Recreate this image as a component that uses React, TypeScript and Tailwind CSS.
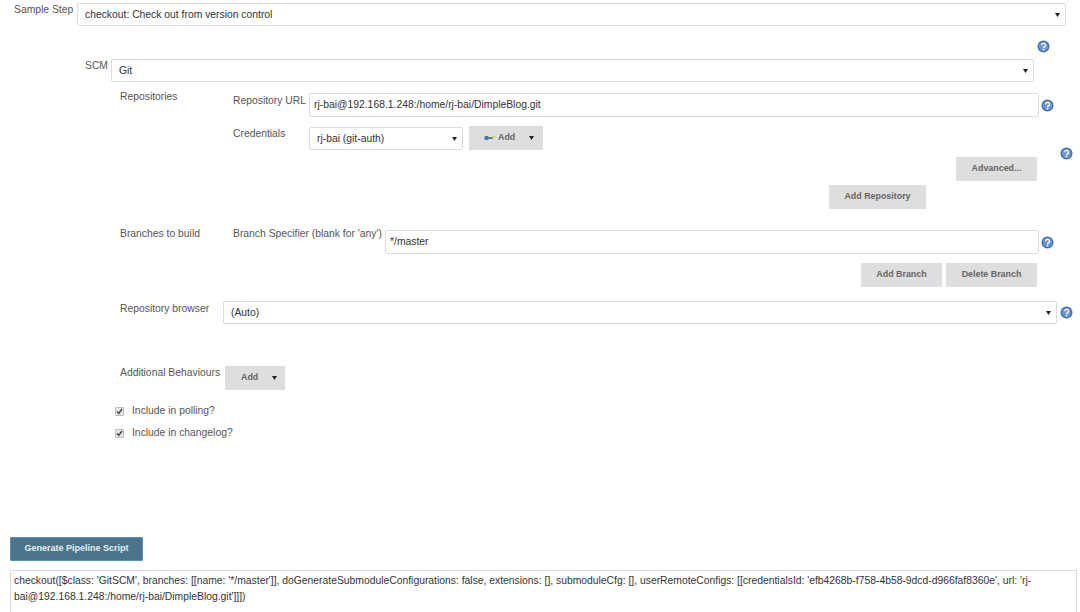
import React from 'react';

function Help() {
  return (
    <svg width="13" height="13" viewBox="0 0 13 13" className="shrink-0">
      <circle cx="6.5" cy="6.5" r="6" fill="#3f6fb0" />
      <circle cx="6.5" cy="6.5" r="4.6" fill="#6f97cf" />
      <path d="M4.7 5.2a1.9 1.9 0 1 1 2.7 1.7c-.6.3-.9.6-.9 1.3" fill="none" stroke="#fff" strokeWidth="1.3" />
      <rect x="5.8" y="9" width="1.4" height="1.4" fill="#fff" />
    </svg>
  );
}

function Caret({ className = '' }: { className?: string }) {
  return (
    <svg width="5" height="4" viewBox="0 0 5 4" className={className}>
      <path d="M0 0h5L2.5 4z" fill="#222" />
    </svg>
  );
}

function Select({ value, className }: { value: string; className: string }) {
  return (
    <div className={`flex h-[23px] items-center justify-between rounded-[2px] border border-[#dcdcdc] bg-white pl-[7px] pr-[5px] text-[#333] ${className}`}>
      <span>{value}</span>
      <Caret />
    </div>
  );
}

function Input({ value, className }: { value: string; className: string }) {
  return (
    <div className={`flex h-[24px] items-center rounded-[2px] border border-[#dcdcdc] bg-white pl-1 text-[#333] ${className}`}>
      {value}
    </div>
  );
}

function Btn({ label, className }: { label: string; className: string }) {
  return (
    <div className={`flex h-[24px] items-center justify-center bg-[#dedede] text-[8.9px] font-bold text-[#666] ${className}`}>
      {label}
    </div>
  );
}

function KeyIcon() {
  return (
    <svg width="12" height="6" viewBox="0 0 12 6">
      <circle cx="2.5" cy="3" r="2.2" fill="#4a7aa8" />
      <rect x="4" y="2" width="5" height="2" fill="#4a7aa8" />
      <rect x="8" y="1" width="3.5" height="2" fill="#e0cf70" />
    </svg>
  );
}

function Check({ label, className }: { label: string; className: string }) {
  return (
    <div className={`flex h-[14px] items-center pl-[115px] ${className}`}>
      <div className="flex h-[9px] w-[9px] items-center justify-center rounded-[1px] border border-[#bbb] bg-[#e6e6e6]">
        <svg width="7" height="7" viewBox="0 0 7 7">
          <path d="M1 3.5l1.8 2L6 1" fill="none" stroke="#444" strokeWidth="1.4" />
        </svg>
      </div>
      <span className="ml-2 text-[#555]">{label}</span>
    </div>
  );
}

export default function App() {
  return (
    <div className="h-[612px] w-[1080px] overflow-hidden bg-white pt-[3px] text-[10.35px] text-[#555] [font-family:'Liberation_Sans',Arial,sans-serif]">
      <div className="flex pl-[14px]">
        <div className="w-[63px] leading-[13px]">Sample Step</div>
        <Select value="checkout: Check out from version control" className="w-[989px]" />
      </div>

      <div className="mt-[14px] flex justify-end pr-[30px]">
        <Help />
      </div>

      <div className="mt-[6px] flex pl-[85px]">
        <div className="w-[26px] leading-[13px]">SCM</div>
        <Select value="Git" className="w-[923px]" />
      </div>

      <div className="mt-[11px] flex pl-[120px]">
        <div className="-mt-[3px] w-[113px] leading-[13px]">Repositories</div>
        <div className="w-[76px] pt-px leading-[13px]">Repository URL</div>
        <Input value="rj-bai@192.168.1.248:/home/rj-bai/DimpleBlog.git" className="w-[730px]" />
        <div className="ml-[2px] pt-[6px]"><Help /></div>
      </div>

      <div className="mt-[9px] flex pl-[233px]">
        <div className="w-[76px] pt-px leading-[13px]">Credentials</div>
        <Select value="rj-bai (git-auth)" className="mt-px w-[154px]" />
        <div className="ml-[6px] flex h-[24px] w-[74px] items-center bg-[#dedede] pl-[15px] text-[8.9px] font-bold text-[#666]">
          <KeyIcon />
          <span className="ml-[2px]">Add</span>
          <Caret className="ml-[14px]" />
        </div>
      </div>

      <div className="-mt-[3px] flex justify-end pr-[7px]">
        <Btn label="Advanced..." className="mt-[10px] w-[81px]" />
        <div className="ml-[23px]"><Help /></div>
      </div>

      <div className="mt-[4px] flex justify-end pr-[154px]">
        <Btn label="Add Repository" className="w-[97px]" />
      </div>

      <div className="mt-[21px] flex pl-[120px]">
        <div className="w-[113px] leading-[13px] -mt-[3px]">Branches to build</div>
        <div className="w-[152px] leading-[13px] -mt-[3px]">Branch Specifier (blank for 'any')</div>
        <Input value="*/master" className="w-[654px]" />
        <div className="ml-[2px] pt-[6px]"><Help /></div>
      </div>

      <div className="mt-[9px] flex justify-end gap-1 pr-[43px]">
        <Btn label="Add Branch" className="w-[81px]" />
        <Btn label="Delete Branch" className="w-[91px]" />
      </div>

      <div className="mt-[14px] flex pl-[120px]">
        <div className="w-[103px] pt-px leading-[13px]">Repository browser</div>
        <Select value="(Auto)" className="w-[834px]" />
        <div className="ml-[3px] pt-[5px]"><Help /></div>
      </div>

      <div className="mt-[42px] flex pl-[120px]">
        <div className="w-[105px] leading-[13px]">Additional Behaviours</div>
        <div className="flex h-[24px] w-[60px] items-center bg-[#dedede] pl-[16px] text-[8.9px] font-bold text-[#666]">
          <span>Add</span>
          <Caret className="ml-[14px]" />
        </div>
      </div>

      <Check label="Include in polling?" className="mt-[14px]" />
      <Check label="Include in changelog?" className="mt-[8px]" />

      <div className="ml-[10px] mt-[97px] flex h-[24px] w-[133px] items-center justify-center rounded-[1px] border border-[#5b8fc0] bg-[#4b758b] text-[9px] font-bold text-[#e8eef2]">
        Generate Pipeline Script
      </div>

      <div className="ml-[10px] mt-[9px] h-[60px] w-[1067px] border border-[#dcdcdc] px-[3px] pt-[2px] leading-[16px] text-[#333]">
        checkout([$class: 'GitSCM', branches: [[name: '*/master']], doGenerateSubmoduleConfigurations: false, extensions: [], submoduleCfg: [], userRemoteConfigs: [[credentialsId: 'efb4268b-f758-4b58-9dcd-d966faf8360e', url: 'rj-bai@192.168.1.248:/home/rj-bai/DimpleBlog.git']]])
      </div>
    </div>
  );
}
